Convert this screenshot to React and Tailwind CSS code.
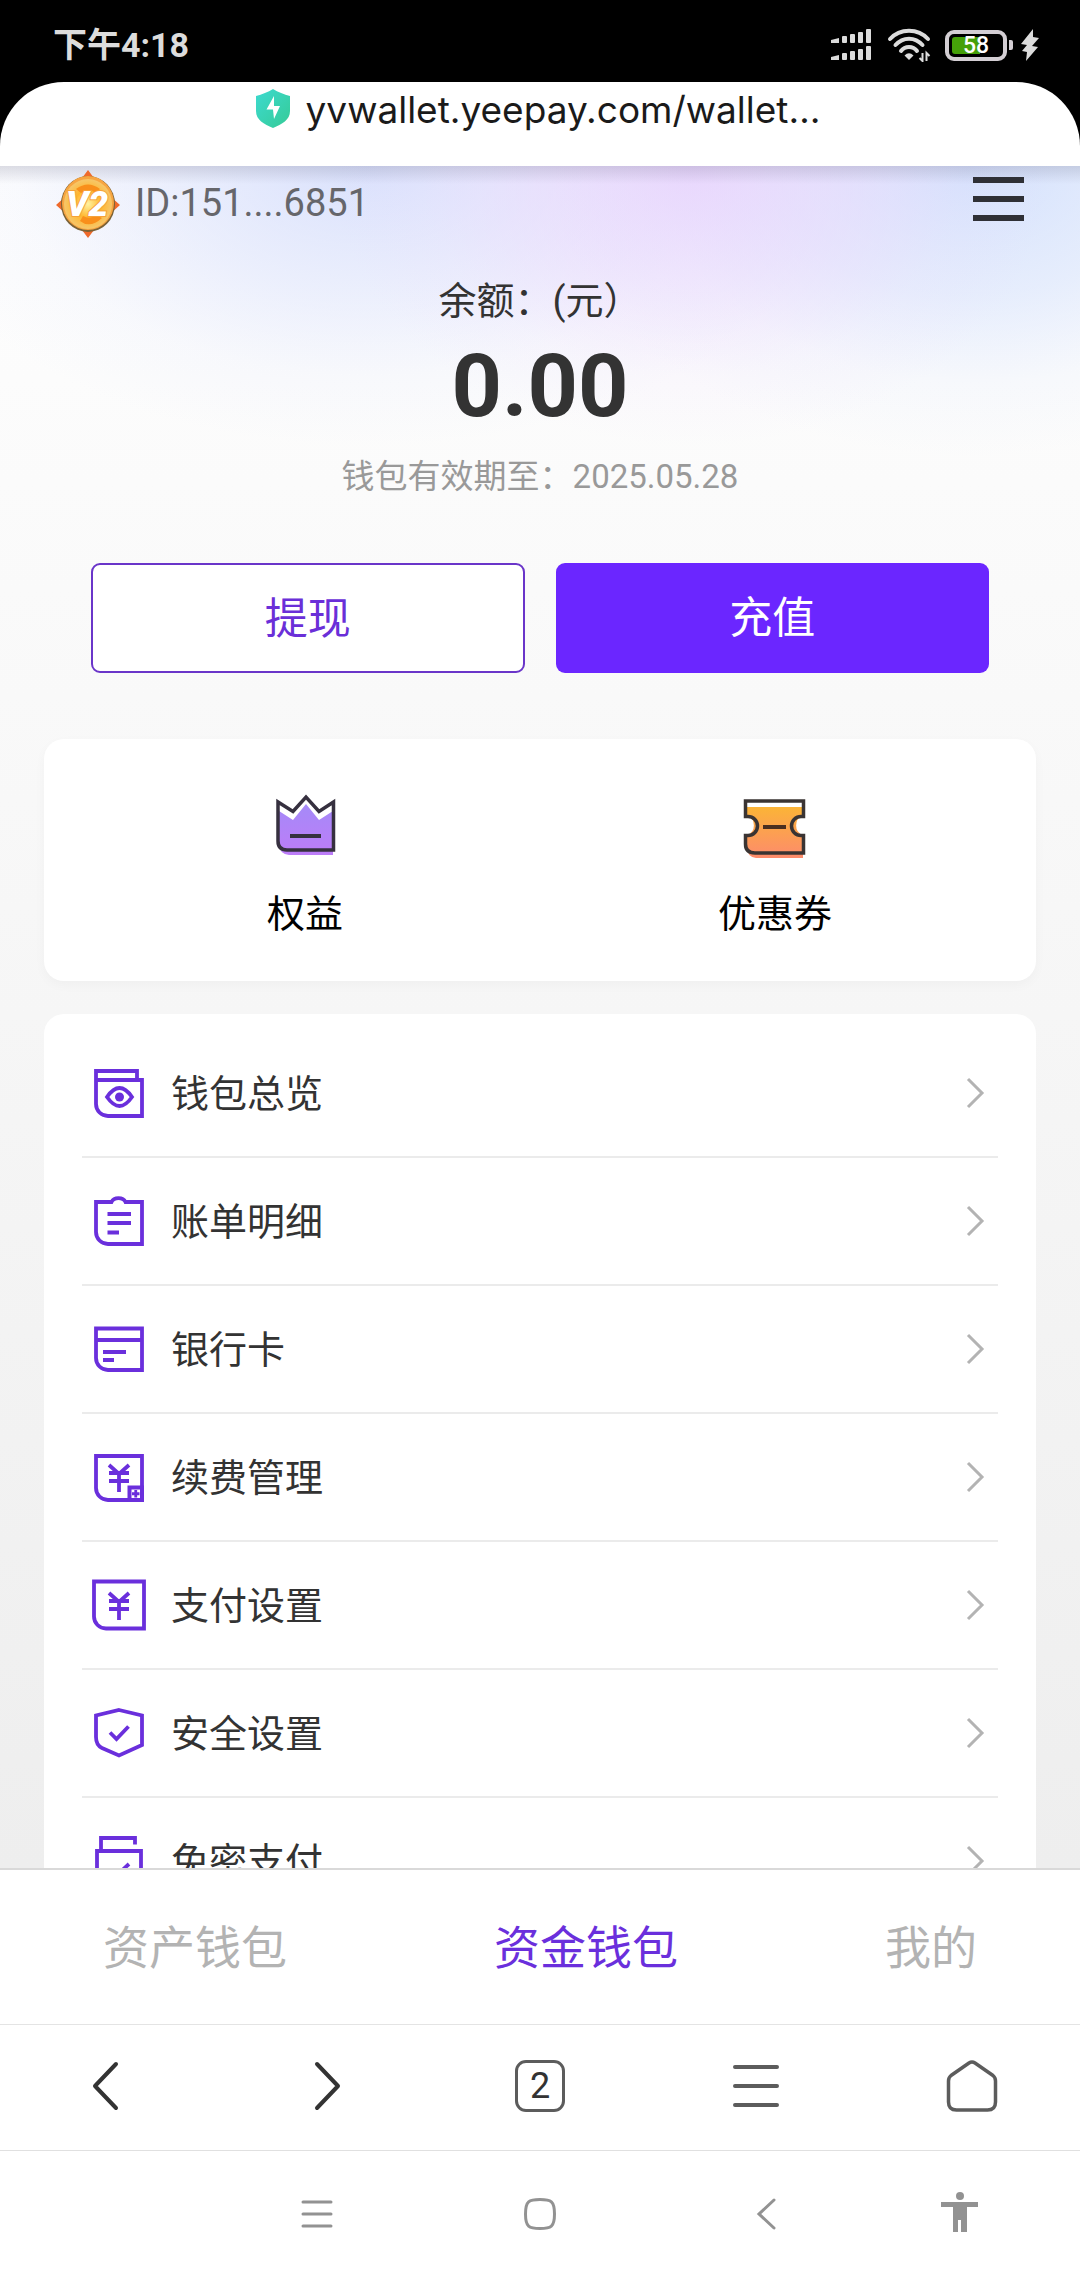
const stroke = { fill: "none", stroke: "currentColor" };

function StatusBar() {
  return (
    <div className="flex h-[82px] shrink-0 items-center justify-between bg-black pr-[41px] pl-[53px] pt-2 text-[#dcdcdc]">
      <span className="text-[34px] leading-[40px] font-bold">下午4:18</span>
      <div className="flex items-center">
        <svg width="41" height="34" viewBox="0 0 41 34" fill="currentColor" aria-label="信号">
          {[0, 17].map((y) => (
            <g key={y}>
              <path d={`M0 ${y + 12}l8-2v5H0z`} />
              <rect x="11" y={y + 8} width="5" height="7" rx="1" />
              <rect x="19" y={y + 6} width="5" height="9" rx="1" />
              <rect x="27" y={y + 4} width="5" height="11" rx="1" />
              <rect x="35" y={y + 1} width="5" height="14" rx="1" />
            </g>
          ))}
        </svg>
        <svg className="ml-[15px]" width="44" height="34" viewBox="0 0 44 34" aria-label="无线网络">
          <g {...stroke} strokeWidth="4" strokeLinecap="round">
            <path d="M3 11C13 0 31 0 41 11" />
            <path d="M8.500 17C16 8.500 28 8.500 35.500 17" />
            <path d="M14 23C18 17.500 26 17.500 30 23" />
          </g>
          <path d="M22 32l-4.500-4.500Q22 23 26.500 27.500z" fill="currentColor" />
          <path d="M35.500 25v8l-3-3M39.500 33v-8l3 3" {...stroke} strokeWidth="2" />
        </svg>
        <div className="ml-[14px] flex h-[31px] w-[62px] rounded-[9px] border-4 border-[#d3ced3] p-[3px]">
          <div className="relative flex w-full items-center">
            <div className="h-full w-[58%] rounded-l-[3px] bg-[#45a009]" />
            <span className="absolute inset-0 flex items-center justify-center text-[23px] leading-none font-medium text-white">58</span>
          </div>
        </div>
        <div className="ml-[2px] h-[10px] w-[4px] rounded-r-[2px] bg-[#d3ced3]" />
        <svg className="ml-[8px]" width="18" height="32" viewBox="0 0 18 32" aria-label="充电中">
          <path d="M12 0L0 15l6 1L1 22l5 1-1 9L17 18l-6-1 7-8-6-1z" fill="currentColor" />
        </svg>
      </div>
    </div>
  );
}

function AddressBar() {
  return (
    <div className="shrink-0 bg-black">
      <div className="flex h-[84px] justify-center gap-[16px] rounded-t-[64px] bg-white pt-[2px] pr-[4px]">
        <svg className="mt-[5px]" width="34" height="39" viewBox="0 0 34 39" aria-label="安全网站">
          <defs>
            <linearGradient id="shield" x1="0" y1="0" x2="1" y2="1">
              <stop offset="0" stopColor="#3ddad0" />
              <stop offset="1" stopColor="#35cb96" />
            </linearGradient>
          </defs>
          <path d="M17 0C22 3 28 5.500 34 7V22C34 31 26 35 17 39C8 35 0 31 0 22V7C6 5.500 12 3 17 0Z" fill="url(#shield)" />
          <path d="M18 7L10.500 20.500H17L18 30L24 17H18Z" fill="#fff" />
        </svg>
        <span className="font-[Inter] text-[37px] leading-[52px] text-[#1a1a1a]">yvwallet.yeepay.com/wallet…</span>
      </div>
    </div>
  );
}

function Badge() {
  return (
    <svg width="64" height="74" viewBox="0 0 64 74" aria-label="V2">
      <defs>
        <radialGradient id="coin">
          <stop offset="0" stopColor="#fff3a0" />
          <stop offset=".55" stopColor="#ffb62e" />
          <stop offset="1" stopColor="#f6c76a" />
        </radialGradient>
      </defs>
      <path d="M32 5l9 12H23zM32 73l9-12H23zM0 40l10-9v18zM64 40l-10-9v18z" fill="#ef6a2b" />
      <ellipse cx="32" cy="39" rx="27" ry="28" fill="#7a6236" />
      <ellipse cx="32" cy="38" rx="26" ry="27" fill="#f7a541" />
      <ellipse cx="32" cy="39" rx="24" ry="25" fill="url(#coin)" />
      <path d="M20 24Q32 15 44 24L40 28Q32 22 25 28ZM24 56Q34 64 46 53L40 50Q34 55 27 51Z" fill="#f98f1b" />
      <text x="31" y="51" textAnchor="middle" fontFamily="Roboto, sans-serif" fontSize="35" fontWeight="900" fontStyle="italic" fill="#fff" stroke="#f6a23a" strokeWidth="2" paintOrder="stroke">V2</text>
    </svg>
  );
}

function Crown() {
  return (
    <svg width="64" height="64" viewBox="0 0 64 64" aria-hidden="true">
      <defs>
        <linearGradient id="crown" x1="0" y1="0" x2="0" y2="1">
          <stop offset="0" stopColor="#a58af8" />
          <stop offset="1" stopColor="#bd7cf8" />
        </linearGradient>
      </defs>
      <path d="M6 18L20 27L33 11L46 27L60 18V62H16Q6 61 6 50Z" fill="url(#crown)" />
      <path d="M60.500 9V57H14Q5 57 5 48V9L20 18.500L33 4L46 18.500Z" fill="none" stroke="#36303f" strokeWidth="3.500" />
      <path d="M17 43H48" stroke="#36303f" strokeWidth="4" />
    </svg>
  );
}

function Ticket() {
  return (
    <svg width="64" height="66" viewBox="0 0 64 66" className="-mb-[2px]" aria-hidden="true">
      <defs>
        <linearGradient id="ticket" x1="0" y1="0" x2="0" y2="1">
          <stop offset="0" stopColor="#fbb437" />
          <stop offset="1" stopColor="#fd8b6c" />
        </linearGradient>
      </defs>
      <path d="M4 14H60V23A10 10 0 0 0 60 42V65H13Q4 64 4 54V42A10 10 0 0 0 4 23Z" fill="url(#ticket)" />
      <path d="M2.500 8H60.500V23.500H58A9.500 9.500 0 0 0 58 42.500H60.500V60H12Q2.500 60 2.500 51V42.500H5A9.500 9.500 0 0 0 5 23.500H2.500Z" fill="none" stroke="#3a3433" strokeWidth="3.500" />
      <path d="M20 34H43" stroke="#4a2f20" strokeWidth="4" />
    </svg>
  );
}

const icons = {
  overview: (
    <>
      <path d="M5 15H51V51H17A12 12 0 0 1 5 39V6H46V15" />
      <path d="M16 32Q28.500 14 41 32Q28.500 50 16 32Z" />
      <circle cx="28.500" cy="32" r="4.500" fill="currentColor" stroke="none" />
    </>
  ),
  bill: (
    <>
      <path d="M5 9H20.500A7.500 6 0 0 1 34.500 9H51V51H17A12 12 0 0 1 5 39Z" />
      <path d="M16.500 21H40M16.500 30H40M16.500 39.500H28" />
    </>
  ),
  card: (
    <>
      <path d="M5 7.500H51V49H17A12 12 0 0 1 5 37ZM5 19H51" />
      <path d="M12 31H35M12 39H23" />
    </>
  ),
  renew: (
    <>
      <path d="M5 7H51V51H17A12 12 0 0 1 5 39Z" />
      <path d="M18 16L28 25L38 16M18 24H38M18 32H38M28 24V43" />
      <rect x="38.500" y="38.500" width="12.500" height="12.500" fill="#fff" strokeWidth="4" />
      <path d="M44.750 41V48.500M41 44.750H48.500" strokeWidth="2.800" />
    </>
  ),
  pay: (
    <>
      <path d="M3 4.500H53V51.500H15A12 12 0 0 1 3 39.500Z" />
      <path d="M18 16L28 25L38 16M18 24H38M18 32H38M28 24V43" />
    </>
  ),
  security: (
    <>
      <path d="M28 5L51 10.500V40L28 50.500L11 43Q5 40 5 32V10.500Z" />
      <path d="M19 27.500L25.500 34L37.500 21.500" />
    </>
  ),
  free: (
    <>
      <path d="M10 17V5H44V11.500" />
      <path d="M6 18H50V51H17A12 12 0 0 1 6 39Z" />
      <path d="M18 38L25 43L38 31" />
    </>
  ),
};

const menu = [
  ["overview", "钱包总览"],
  ["bill", "账单明细"],
  ["card", "银行卡"],
  ["renew", "续费管理"],
  ["pay", "支付设置"],
  ["security", "安全设置"],
  ["free", "免密支付"],
];

function MenuRow({ icon, label }) {
  return (
    <li className="border-b-2 border-[#ebebeb] last:border-b-0">
      <a href="#" className="flex h-[126px] items-center pr-[13px] pl-[9px] text-[#333]">
        <svg width="56" height="56" viewBox="0 0 56 56" className="text-[#6a2fdc]" {...stroke} strokeWidth="3.800" aria-hidden="true">
          {icons[icon]}
        </svg>
        <span className="ml-[24px] flex-1 pt-[2px] text-[38px] leading-[56px]">{label}</span>
        <svg width="20" height="32" viewBox="0 0 20 32" className="text-[#b3b3b3]" {...stroke} strokeWidth="3" aria-hidden="true">
          <path d="M3 2L17 16L3 30" />
        </svg>
      </a>
    </li>
  );
}

function Wallet() {
  return (
    <main className="relative min-h-0 flex-1 overflow-y-auto bg-linear-to-b from-[#fefefe] to-[#eeeeee] [scrollbar-width:none]">
      <div className="bg-[radial-gradient(ellipse_360px_280px_at_64%_0px,rgba(232,212,253,0.9)_0%,rgba(232,212,253,0.45)_45%,rgba(232,212,253,0.12)_75%,transparent_100%),radial-gradient(ellipse_420px_290px_at_90%_0px,rgba(208,222,252,0.9)_0%,rgba(208,222,252,0.5)_45%,rgba(208,222,252,0.12)_75%,transparent_100%),radial-gradient(ellipse_470px_280px_at_34%_0px,rgba(214,222,252,0.9)_0%,rgba(214,222,252,0.45)_45%,rgba(214,222,252,0.12)_75%,transparent_100%)]">
        <div className="bg-[linear-gradient(to_bottom,rgba(80,80,110,0.18)_0px,transparent_18px)]">
          <header className="flex h-[72px] items-center pr-[54px] pl-[56px]">
            <Badge />
            <span className="ml-[15px] flex-1 pt-[2px] text-[38px] leading-[48px] text-[#66666b]">ID:151....6851</span>
            <button type="button" aria-label="菜单">
              <svg width="54" height="50" viewBox="0 0 54 50" fill="#2f3036">
                <path d="M1 0H52V6H1zM1 19H52V25H1zM1 38H52V44H1z" />
              </svg>
            </button>
          </header>
          <section className="flex flex-col items-center pt-[35px]">
            <h1 className="text-[38px] leading-[56px] text-[#333]">余额：(元）</h1>
            <p className="mt-[13px] text-[88px] leading-[88px] font-bold text-[#333]">0.00</p>
            <p className="mt-[23px] text-[33px] leading-[48px] text-[#999]">钱包有效期至：2025.05.28</p>
          </section>
        </div>
      </div>

      <div className="mt-[62px] grid grid-cols-2 gap-[31px] px-[91px] text-[43px] leading-[56px]">
        <button type="button" className="h-[110px] rounded-[9px] border-2 border-[#6a35c9] bg-white pt-[2px] text-[#6a2fd8]">提现</button>
        <button type="button" className="h-[110px] rounded-[9px] bg-[#6b26ff] text-white">充值</button>
      </div>

      <div className="mx-[44px] mt-[66px] grid grid-cols-2 rounded-[20px] bg-white px-[26px] pt-[54px] pb-[39px] text-[38px] leading-[56px] text-black shadow-[0_4px_12px_rgba(0,0,0,0.03)]">
        <a href="#" className="flex flex-col items-center gap-[29px]"><Crown />权益</a>
        <a href="#" className="flex flex-col items-center gap-[29px]"><Ticket />优惠券</a>
      </div>

      <ul className="mx-[44px] mt-[33px] mb-[32px] rounded-[20px] bg-white px-[38px] pt-[16px]">
        {menu.map(([icon, label]) => (
          <MenuRow key={icon} icon={icon} label={label} />
        ))}
      </ul>
    </main>
  );
}

function BrowserBar() {
  return (
    <nav aria-label="浏览器" className="grid h-[126px] shrink-0 grid-cols-5 place-items-center border-t border-[#e4e4e4] bg-white pb-[3px] text-[#5c5c5c]">
      <button type="button" aria-label="后退">
        <svg width="52" height="52" viewBox="0 0 52 52" {...stroke} strokeWidth="4" strokeLinecap="round" strokeLinejoin="round" className="text-[#333]"><path d="M34 4L13 26L34 48" /></svg>
      </button>
      <button type="button" aria-label="前进">
        <svg width="52" height="52" viewBox="0 0 52 52" {...stroke} strokeWidth="4" strokeLinecap="round" strokeLinejoin="round" className="text-[#333]"><path d="M19 4L40 26L19 48" /></svg>
      </button>
      <button type="button" aria-label="标签页 2" className="flex h-[52px] w-[50px] items-center justify-center rounded-[11px] border-[3px] border-[#5c5c5c] text-[36px] leading-none text-[#333]">2</button>
      <button type="button" aria-label="菜单">
        <svg width="52" height="52" viewBox="0 0 52 52" {...stroke} strokeWidth="4" strokeLinecap="round"><path d="M5 7H47M5 26H47M5 45H47" /></svg>
      </button>
      <button type="button" aria-label="主页">
        <svg width="52" height="52" viewBox="0 0 52 52" {...stroke} strokeWidth="3.500" strokeLinejoin="round"><path d="M23 3Q26 1 29 3L47 15.500Q49.500 17.500 49.500 21V42Q49.500 50 41.500 50H10.500Q2.500 50 2.500 42V21Q2.500 17.500 5 15.500Z" /></svg>
      </button>
    </nav>
  );
}

function SystemNav() {
  return (
    <nav aria-label="系统" className="grid h-[130px] shrink-0 grid-cols-[223fr_223fr_223fr_171fr] place-items-center border-t border-[#e0e0e0] bg-white pr-[35px] pb-[3px] pl-[19%] text-[#929292]">
      <button type="button" aria-label="最近任务">
        <svg width="32" height="32" viewBox="0 0 32 32" {...stroke} strokeWidth="3" strokeLinecap="round"><path d="M2 4H30M2 16H30M2 28H30" /></svg>
      </button>
      <button type="button" aria-label="主屏幕">
        <svg width="32" height="32" viewBox="0 0 32 32" {...stroke} strokeWidth="3"><path d="M16 1.500C27 1.500 30.500 3 30.500 16S27 30.500 16 30.500S1.500 29 1.500 16S5 1.500 16 1.500Z" /></svg>
      </button>
      <button type="button" aria-label="返回">
        <svg width="32" height="32" viewBox="0 0 32 32" {...stroke} strokeWidth="3" strokeLinecap="round"><path d="M27 2L12 16L27 30" /></svg>
      </button>
      <button type="button" aria-label="无障碍">
        <svg width="38" height="44" viewBox="0 0 38 44" fill="currentColor"><circle cx="19" cy="4" r="4" /><path d="M0 10H37V15H26V40H20V28H17V40H12V15H0Z" /></svg>
      </button>
    </nav>
  );
}

export default function App() {
  return (
    <div className="flex h-screen flex-col bg-white font-[Roboto,'Noto_Sans_CJK_SC',sans-serif]">
      <StatusBar />
      <AddressBar />
      <Wallet />
      <nav aria-label="钱包" className="flex h-[156px] shrink-0 items-center justify-between border-t-2 border-[#d9d9d9] bg-white px-[103px] pt-[2px] text-[46px] leading-[64px] text-[#b3b3b3]">
        <a href="#">资产钱包</a>
        <a href="#" aria-current="page" className="text-[#6a2fdc]">资金钱包</a>
        <a href="#">我的</a>
      </nav>
      <BrowserBar />
      <SystemNav />
    </div>
  );
}
